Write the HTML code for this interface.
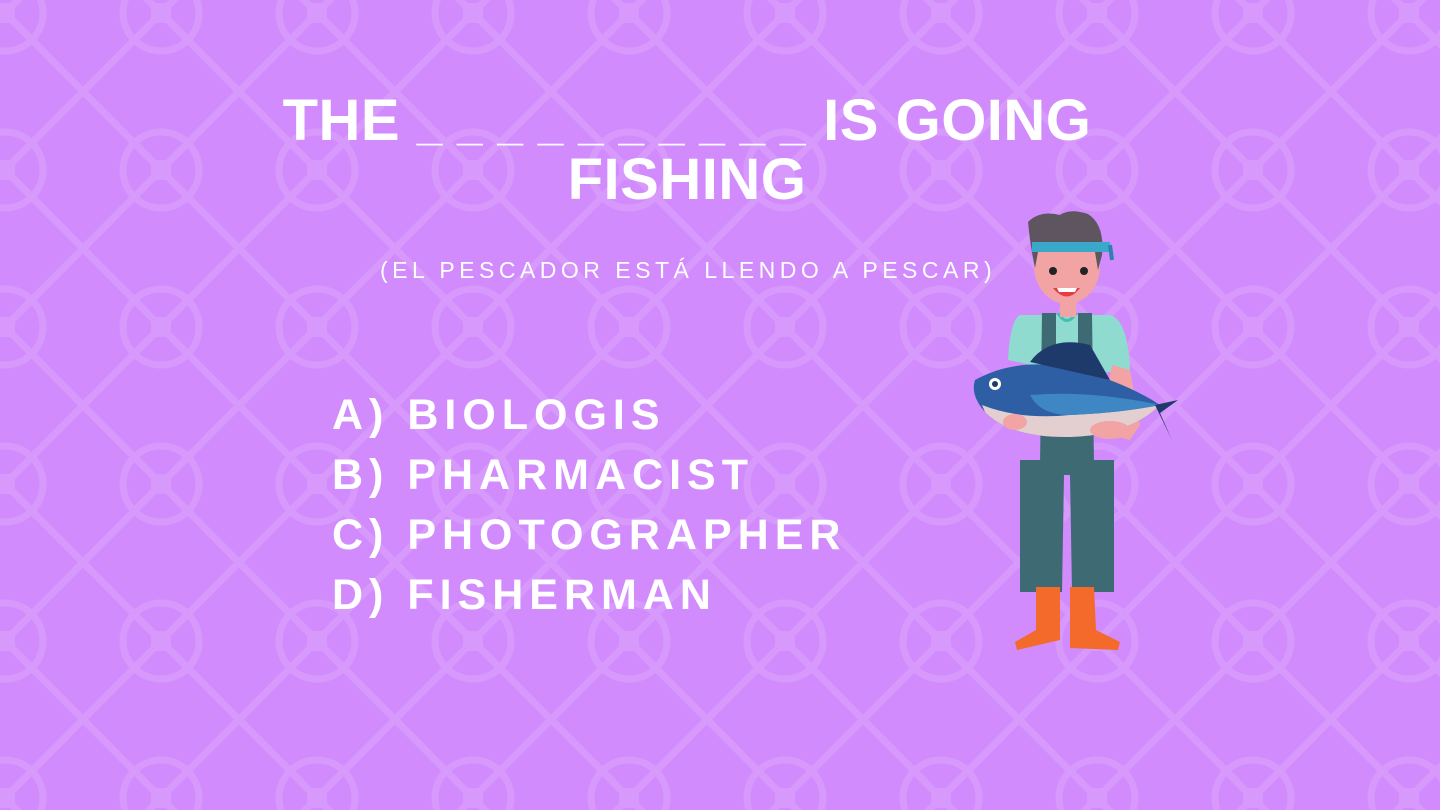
<!DOCTYPE html>
<html><head><meta charset="utf-8"><style>
html,body{margin:0;padding:0}
body{width:1440px;height:810px;overflow:hidden;background:#d18bfc;position:relative;font-family:"Liberation Sans",sans-serif;color:#fff}
svg.bg{position:absolute;left:0;top:0}
.t{position:absolute;left:0;width:1374px;text-align:center;font-weight:bold;font-size:58px;letter-spacing:0.5px;line-height:60px;white-space:nowrap}
.u{letter-spacing:1px;font-size:46px}
.sub{position:absolute;left:380px;top:257px;font-size:23px;letter-spacing:4.5px;white-space:nowrap}
.opt{position:absolute;left:332px;font-weight:bold;font-size:43px;letter-spacing:6px;white-space:nowrap;line-height:50px}
</style></head><body>
<svg class="bg" width="1440" height="810">
<defs><pattern id="p" x="5" y="13" width="156" height="157" patternUnits="userSpaceOnUse">
<g stroke="#d899fc" stroke-width="7" fill="none">
<line x1="0" y1="0" x2="156" y2="157"/><line x1="156" y1="0" x2="0" y2="157"/>
<circle cx="0" cy="0" r="38"/><circle cx="156" cy="0" r="38"/><circle cx="0" cy="157" r="38"/><circle cx="156" cy="157" r="38"/>
</g>
<g fill="#d899fc"><rect x="-10" y="-10" width="20" height="20"/><rect x="146" y="-10" width="20" height="20"/><rect x="-10" y="147" width="20" height="20"/><rect x="146" y="147" width="20" height="20"/></g>
</pattern></defs>
<rect width="1440" height="810" fill="url(#p)"/>
</svg>
<div class="t" style="top:91px">THE <span class="u">_ _ _ _ _ _ _ _ _ _</span> IS GOING</div>
<div class="t" style="top:150px">FISHING</div>
<div class="sub">(EL PESCADOR ESTÁ LLENDO A PESCAR)</div>
<div class="opt" style="top:390px">A) BIOLOGIS</div>
<div class="opt" style="top:450px">B) PHARMACIST</div>
<div class="opt" style="top:510px">C) PHOTOGRAPHER</div>
<div class="opt" style="top:570px">D) FISHERMAN</div>
<svg style="position:absolute;left:960px;top:200px" width="240" height="460" viewBox="0 0 240 460">
<path d="M60 260 L154 260 L154 392 L112 392 L110 275 L104 275 L102 392 L60 392 Z" fill="#3e6a74"/>
<path d="M76 387 L100 387 L100 440 L57 450 L55 442 L76 430 Z" fill="#f36a2a"/>
<path d="M110 387 L134 387 L136 430 L160 442 L158 450 L110 448 Z" fill="#f36a2a"/>
<path d="M60 115 Q50 120 48 160 L120 175 L170 170 Q168 120 150 115 Z" fill="#8fdbcf"/>
<path d="M82 113 L96 113 L96 145 L118 145 L118 113 L132 113 L134 265 L80 265 Z" fill="#3e6a74"/>
<path d="M98 113 Q107 128 116 113" stroke="#3ec2b3" stroke-width="3" fill="none"/>
<path d="M152 165 L170 170 L180 225 L170 240 L140 232 Z" fill="#f2a3a3"/>
<rect x="100" y="95" width="16" height="22" fill="#f2a3a3"/>
<ellipse cx="107" cy="66" rx="33" ry="38" fill="#f2a3a3"/>
<path d="M68 22 Q80 10 100 15 Q110 8 128 14 Q145 25 142 55 L138 70 L135 52 L78 52 L75 68 Q70 45 68 22 Z" fill="#5e5560"/>
<path d="M72 42 L150 42 L150 52 L72 52 Z" fill="#3aa9c9"/>
<path d="M150 45 L152 60" stroke="#2f80b0" stroke-width="4"/>
<circle cx="93" cy="71" r="4" fill="#222"/><circle cx="124" cy="71" r="4" fill="#222"/>
<path d="M93 88 Q107 105 120 88 Z" fill="#e93b46"/>
<path d="M97 88 L117 88 L115 92 L99 92 Z" fill="#fff"/>
<path d="M15 180 Q60 155 120 170 Q170 185 200 205 Q170 235 110 237 Q50 238 25 212 Q10 195 15 180 Z" fill="#2e5ea4"/>
<path d="M22 205 Q60 220 110 215 Q160 213 200 205 Q170 235 110 237 Q50 238 25 212 Z" fill="#e3cfd0"/>
<path d="M70 195 Q130 190 200 205 Q160 213 110 215 Q80 215 70 195Z" fill="#3f86c4"/>
<path d="M70 162 Q90 135 130 145 L150 180 Z" fill="#1e3a6a"/>
<path d="M195 205 L218 200 L200 213 L212 240 Z" fill="#1e3a6a"/>
<circle cx="35" cy="184" r="6" fill="#fff"/><circle cx="35" cy="184" r="3" fill="#1e3a6a"/>
<ellipse cx="55" cy="222" rx="12" ry="8" fill="#f2a3a3"/>
<ellipse cx="150" cy="230" rx="20" ry="9" fill="#f2a3a3"/>
</svg>
</body></html>
